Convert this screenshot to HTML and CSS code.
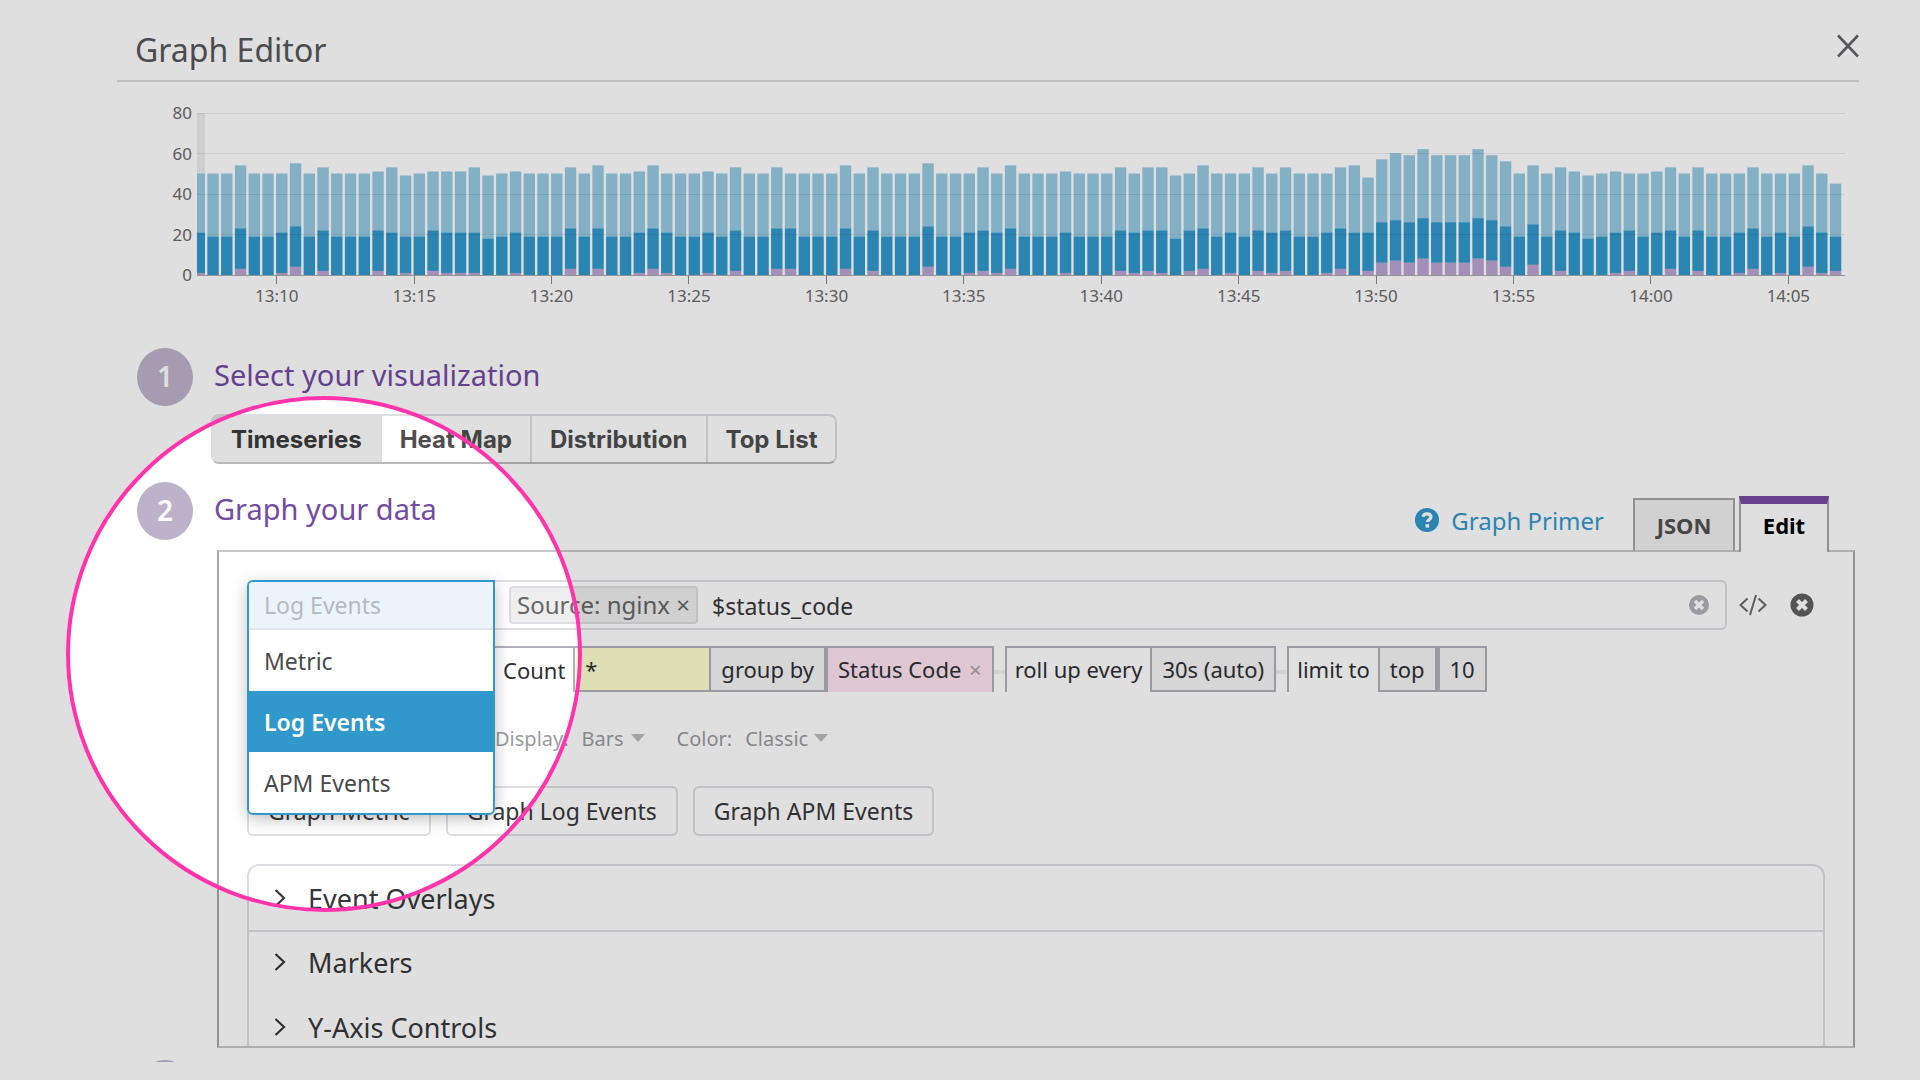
FILE: index.html
```html
<!DOCTYPE html>
<html lang="en">
<head>
  <meta charset="UTF-8">
  <title>Graph Editor</title>
  <link rel="stylesheet" href="styles.css">
</head>
<body>

<main class="editor">
  <header class="editor-header">
    <h1>Graph Editor</h1>
    <button class="icon-btn" aria-label="Close">
      <svg width="22" height="24" viewBox="0 0 22 24"><path d="M1 1.500L21 22.500M21 1.500L1 22.500" stroke="#65656a" stroke-width="2.600" fill="none"/></svg>
    </button>
  </header>

  <section class="chart">
    <div class="y-axis">
      <span>80</span><span>60</span><span>40</span><span>20</span><span>0</span>
    </div>
    <div class="plot">
      <svg class="bars" id="bars" viewBox="0 0 1648 163" preserveAspectRatio="none"></svg>
      <div class="x-axis">
        <span>13:10</span><span>13:15</span><span>13:20</span><span>13:25</span>
        <span>13:30</span><span>13:35</span><span>13:40</span><span>13:45</span>
        <span>13:50</span><span>13:55</span><span>14:00</span><span>14:05</span>
      </div>
    </div>
  </section>

  <section class="step">
    <span class="step-number">1</span>
    <h2>Select your visualization</h2>
  </section>

  <div class="viz-types">
    <button class="active">Timeseries</button>
    <button>Heat Map</button>
    <button>Distribution</button>
    <button>Top List</button>
  </div>

  <section class="step step-data">
    <span class="step-number">2</span>
    <h2>Graph your data</h2>
    <a class="primer" href="#">
      <svg width="24" height="24" viewBox="0 0 24 24"><circle cx="12" cy="12" r="12" fill="#3198cc"/><path d="M8 8.800C8.400 6.700 10 5.800 12 5.800c2.300 0 4 1.200 4 3.200 0 2.700-3.600 2.600-3.600 5.100" stroke="#fff" stroke-width="3.200" fill="none"/><rect x="10.500" y="16.200" width="3.600" height="3.400" fill="#fff"/></svg>
      Graph Primer
    </a>
    <div class="tabs">
      <button class="tab">JSON</button>
      <button class="tab active">Edit</button>
    </div>
  </section>

  <section class="panel">
    <div class="query-row">
      <div class="source">
        <div class="source-menu" role="listbox" aria-label="Source">
          <button class="current">Log Events</button>
          <button>Metric</button>
          <button class="selected">Log Events</button>
          <button>APM Events</button>
        </div>
      </div>
      <div class="search">
        <span class="tag">Source: nginx <button aria-label="Remove source">×</button></span>
        <input type="text" value="$status_code" aria-label="Search query">
        <button class="icon-btn" aria-label="Clear search">
          <svg width="20" height="20" viewBox="0 0 20 20"><circle cx="10" cy="10" r="10" fill="#b3b1b8"/><path d="M6 6l8 8M14 6l-8 8" stroke="#fff" stroke-width="3.600"/></svg>
        </button>
      </div>
      <button class="icon-btn code" aria-label="Edit as code">
        <svg width="28" height="22" viewBox="0 0 28 22"><path d="M8.500 4.500L1.500 11l7 6.500M19.500 4.500l7 6.500-7 6.500M17 1l-6 20" stroke="#6b6b6e" stroke-width="2" fill="none"/></svg>
      </button>
      <button class="icon-btn" aria-label="Remove query">
        <svg width="24" height="24" viewBox="0 0 24 24"><circle cx="12" cy="12" r="11.500" fill="#616161"/><path d="M7.500 7.500l9 9M16.500 7.500l-9 9" stroke="#fff" stroke-width="4"/></svg>
      </button>
    </div>

    <div class="function-row">
      <button class="cell count">Count</button>
      <input class="cell measure" type="text" value="*" aria-label="Measure">
      <button class="cell filled group">group by</button>
      <span class="cell facet">Status Code <button aria-label="Remove facet">×</button></span>
      <span class="link"></span>
      <span class="cell plain">roll up every</span>
      <button class="cell filled">30s (auto)</button>
      <span class="link"></span>
      <span class="cell plain">limit to</span>
      <button class="cell filled">top</button>
      <button class="cell filled">10</button>
    </div>

    <div class="display-row">
      <label for="display">Display:</label>
      <select id="display"><option>Bars</option></select>
      <svg class="caret" width="14" height="8" viewBox="0 0 14 8"><path d="M0 0h14L7 8z" fill="#bcbcbe"/></svg>
      <label class="color-label" for="color">Color:</label>
      <select id="color"><option>Classic</option></select>
      <svg class="caret" width="14" height="8" viewBox="0 0 14 8"><path d="M0 0h14L7 8z" fill="#bcbcbe"/></svg>
    </div>

    <div class="add-row">
      <button>Graph Metric</button>
      <button>Graph Log Events</button>
      <button>Graph APM Events</button>
    </div>

    <div class="options">
      <button>
        <svg width="12" height="18" viewBox="0 0 12 18"><path d="M1.500 1L10 9l-8.500 8" stroke="#37373b" stroke-width="2.200" fill="none"/></svg>
        Event Overlays
      </button>
      <button>
        <svg width="12" height="18" viewBox="0 0 12 18"><path d="M1.500 1L10 9l-8.500 8" stroke="#37373b" stroke-width="2.200" fill="none"/></svg>
        Markers
      </button>
      <button>
        <svg width="12" height="18" viewBox="0 0 12 18"><path d="M1.500 1L10 9l-8.500 8" stroke="#37373b" stroke-width="2.200" fill="none"/></svg>
        Y-Axis Controls
      </button>
    </div>
  </section>

  <section class="step step-last">
    <span class="step-number"></span>
  </section>
</main>

<div class="spotlight"></div>

<script src="chart.js"></script>
</body>
</html>
```
FILE: styles.css
```css
:root {
  --purple: #754aa3;
  --blue: #3198cc;
  --text: #37373b;
  --line: #dedde2;
  --cell-line: #b3b1b8;
  --pink: #ff33aa;
}

* {
  box-sizing: border-box;
}

body {
  margin: 0;
  height: 100vh;
  overflow: hidden;
  position: relative;
  background: #fff;
  color: var(--text);
  font-family: "Noto Sans", sans-serif;
}

button,
input,
select {
  font-family: inherit;
  font-size: inherit;
  color: inherit;
  margin: 0;
  padding: 0;
  border: none;
  background: none;
}

button {
  cursor: pointer;
}

h1,
h2 {
  margin: 0;
  font-weight: 400;
}

svg {
  display: block;
}

.icon-btn {
  flex: none;
}

.editor {
  height: calc(100vh - 18px);
  overflow: hidden;
  padding: 0 61px 0 117px;
}

.editor-header {
  display: flex;
  align-items: center;
  justify-content: space-between;
  height: 82px;
  padding: 20px 0 0 18px;
  border-bottom: 2px solid #dcdcdc;
}

.editor-header h1 {
  font-size: 32px;
  line-height: 44px;
  color: #57575b;
}

.editor-header .icon-btn {
  padding-bottom: 8px;
}

/* chart */
.chart {
  display: flex;
  padding: 31px 14px 0 48px;
  color: #6a6a6a;
  font-size: 17px;
  line-height: 20px;
}

.y-axis {
  width: 32px;
  height: 182px;
  margin-top: -10px;
  padding-right: 5px;
  display: flex;
  flex-direction: column;
  justify-content: space-between;
  text-align: right;
}

.plot {
  flex: 1;
}

.bars {
  width: 100%;
  height: 163px;
}

.x-axis {
  display: flex;
  margin: 0 -12px 0 11px;
}

.x-axis span {
  flex: 1;
  text-align: center;
}

.x-axis span::before {
  content: "";
  display: block;
  width: 1px;
  height: 8px;
  margin: 0 auto 2px;
  background: #888;
}

/* numbered steps */
.step {
  display: flex;
  align-items: center;
  height: 58px;
  margin-top: 42px;
  padding-left: 20px;
}

.step-number {
  width: 56px;
  height: 58px;
  margin-right: 21px;
  border-radius: 50%;
  background: #beb2cb;
  color: #fff;
  font-size: 28px;
  font-weight: 600;
  line-height: 56px;
  text-align: center;
}

.step h2 {
  padding-bottom: 4px;
  font-size: 29px;
  line-height: 40px;
  color: var(--purple);
}

.viz-types {
  display: flex;
  width: max-content;
  margin: 8px 0 0 94px;
  border: 2px solid var(--line);
  border-bottom-color: #b9b9b9;
  border-radius: 8px;
  overflow: hidden;
}

.viz-types button {
  height: 46px;
  padding: 0 18px;
  border-right: 2px solid var(--line);
  font-family: Inter, sans-serif;
  font-size: 24px;
  font-weight: 700;
  color: #4e4e4e;
}

.viz-types button:last-child {
  border-right: none;
}

.viz-types .active {
  background: #dedede;
  color: #333;
}

.step-data {
  position: relative;
  height: 68px;
  margin-top: 18px;
  padding-right: 30px;
}

.step-data .step-number,
.step-data h2 {
  margin-bottom: 10px;
}

.primer {
  display: flex;
  align-items: center;
  gap: 12px;
  margin-left: auto;
  margin-right: 29px;
  padding-top: 8px;
  font-size: 24px;
  color: var(--blue);
  text-decoration: none;
}

/* the open tab covers the top border of the panel */
.tabs {
  display: flex;
  align-items: flex-end;
  align-self: flex-end;
  gap: 4px;
  margin-bottom: -2px;
}

.tab {
  height: 54px;
  width: 102px;
  border: 2px solid #a5a5a5;
  border-bottom-color: #c9c9c9;
  background: #efefef;
  color: #505050;
  font-size: 22px;
  font-weight: 700;
}

.tab.active {
  height: 56px;
  width: 90px;
  padding-bottom: 6px;
  border-top: 8px solid var(--purple);
  border-bottom: none;
  background: #fff;
  color: #000;
}

/* panel */
.panel {
  height: calc(100vh - 582px);
  margin: 0 4px 0 100px;
  padding: 28px 28px 0;
  border: 2px solid #a9a9a9;
  border-top-color: #c9c9c9;
  border-bottom-color: #c9c9c9;
  overflow: hidden;
}

.query-row {
  display: flex;
  align-items: center;
  height: 50px;
  padding-right: 11px;
}

.source {
  position: relative;
  width: 248px;
  height: 50px;
}

.source-menu {
  position: absolute;
  top: 0;
  left: 0;
  z-index: 2;
  width: 100%;
  border: 2px solid var(--blue);
  border-radius: 6px 0 6px 6px;
  background: #fff;
  box-shadow: 0 4px 16px rgba(0, 0, 0, 0.25);
  overflow: hidden;
}

.source-menu button {
  display: block;
  width: 100%;
  height: 61px;
  padding-left: 15px;
  font-size: 23px;
  text-align: left;
  color: #4a4a4d;
}

.source-menu .current {
  height: 48px;
  border-bottom: 2px solid #e2e6ec;
  background: #ebf4fb;
  color: #b7b9c0;
}

.source-menu .selected {
  background: var(--blue);
  color: #fff;
  font-weight: 600;
}

.search {
  display: flex;
  align-items: center;
  flex: 1;
  height: 50px;
  padding: 0 16px 0 14px;
  border: 2px solid var(--line);
  border-left: none;
  border-radius: 0 6px 6px 0;
}

.tag {
  height: 38px;
  padding: 0 6px;
  border: 2px solid #dddde1;
  border-radius: 4px;
  background: #eee;
  color: #666;
  font-size: 24px;
  line-height: 32px;
  white-space: nowrap;
}

.search input {
  flex: 1;
  min-width: 0;
  padding: 2px 0 0 14px;
  font-size: 23px;
}

.code {
  margin: 0 23px 0 12px;
}

.function-row {
  display: flex;
  margin-top: 16px;
  padding-left: 248px;
  color: #2f2f33;
}

.cell {
  height: 46px;
  padding: 0 10px;
  border: 2px solid var(--cell-line);
  font-size: 22px;
  line-height: 42px;
  white-space: nowrap;
}

.filled {
  background: #f5f5f5;
}

.filled + .filled {
  border-left-width: 3px;
}

.count {
  padding: 0 8px;
  border-width: 2px 0 0;
}

.measure {
  width: 138px;
  background: #ffffd0;
}

.group {
  border-left: none;
}

.facet {
  border-bottom: none;
  background: #fee3f2;
}

.facet button {
  margin-left: 2px;
  color: #aaa0a8;
}

.plain {
  padding: 0 8px;
  border-width: 2px 0 0 2px;
}

.link {
  width: 11px;
  height: 4px;
  margin-top: 24px;
  background: #f0f0f0;
}

.display-row {
  display: flex;
  align-items: center;
  height: 28px;
  margin-top: 32px;
  padding-left: 248px;
  font-size: 20px;
  color: #9b9b9f;
}

.display-row select {
  appearance: none;
  margin-left: 13px;
}

.caret {
  margin-left: 6px;
}

.color-label {
  margin-left: 32px;
}

.add-row {
  display: flex;
  gap: 15px;
  margin-top: 34px;
}

.add-row button {
  height: 50px;
  padding: 0 19px;
  border: 2px solid var(--line);
  border-radius: 6px;
  font-size: 23px;
}

.options {
  margin-top: 28px;
  border: 2px solid var(--line);
  border-radius: 12px;
}

.options button {
  display: flex;
  align-items: center;
  gap: 22px;
  width: 100%;
  height: 65px;
  padding: 0 0 5px 25px;
  font-size: 27px;
}

.options button:first-child {
  height: 66px;
  padding-bottom: 0;
  border-bottom: 2px solid var(--line);
}

.step-last {
  margin-top: 12px;
}

/* dims everything outside the ring */
.spotlight {
  position: absolute;
  left: 66px;
  top: 396px;
  z-index: 5;
  width: 516px;
  height: 516px;
  border: 4px solid var(--pink);
  border-radius: 50%;
  box-shadow: 0 0 0 2400px rgba(0, 0, 0, 0.125);
  pointer-events: none;
}
```
FILE: chart.js
```js
// one entry per 30s: [total, top of the dark part, top of the purple part]
const data = [
  [50,21,1],[50,19,0],[50,19,0],[54,23,3],[50,19,0],[50,19,0],[50,21,1],[55,24,4],[50,19,0],[53,22,2],
  [50,19,0],[50,19,0],[50,19,0],[51,22,2],[53,21,0],[49,19,1],[50,19,0],[51,22,2],[51,21,1],[51,21,1],
  [53,21,1],[49,18,0],[50,19,0],[51,21,1],[50,19,0],[50,19,0],[50,19,0],[53,23,3],[50,19,0],[54,23,3],
  [50,19,0],[50,19,0],[51,21,1],[54,23,3],[50,21,1],[50,19,0],[50,19,0],[51,21,1],[50,19,0],[53,22,2],
  [50,19,0],[50,19,0],[53,23,3],[50,23,3],[50,19,0],[50,19,0],[50,19,0],[54,23,3],[50,19,0],[53,22,2],
  [50,19,0],[50,19,0],[50,19,0],[55,24,4],[50,19,0],[50,19,0],[50,21,1],[53,22,2],[50,21,1],[54,23,3],
  [50,19,0],[50,19,0],[50,19,0],[51,21,1],[50,19,0],[50,19,0],[50,19,0],[53,22,2],[50,21,1],[53,22,2],
  [53,22,1],[49,18,0],[50,22,2],[54,23,3],[50,19,0],[50,21,1],[50,19,0],[53,22,2],[50,21,1],[53,22,2],
  [50,19,0],[50,19,0],[50,21,1],[53,23,3],[54,21,0],[48,21,2],[57,26,6],[60,27,7],[59,26,6],[62,28,8],
  [59,26,6],[59,26,6],[59,26,6],[62,28,8],[59,27,7],[56,24,4],[50,19,0],[54,25,5],[50,19,0],[53,22,2],
  [51,21,0],[49,18,0],[50,19,0],[51,21,1],[50,22,2],[50,19,0],[51,21,0],[53,22,3],[50,19,0],[53,22,2],
  [50,19,0],[50,19,0],[50,21,1],[53,23,3],[50,19,0],[50,21,1],[50,19,0],[54,24,4],[50,21,1],[45,19,2]
];

const base = 162;
const unit = 2.03;
const pitch = 13.75;

function rect(x, y, w, h, fill) {
  return `<rect x="${x}" y="${y}" width="${w}" height="${h}" fill="${fill}"/>`;
}

function segment(x, from, to, fill) {
  return rect(x, base - to * unit, 11.4, (to - from) * unit, fill);
}

let out = rect(0, 0, 8, 62, '#ececec');
data.forEach(([total, dark, purple], i) => {
  const x = i * pitch - 3.4;
  out += segment(x, dark, total, '#97cae3');
  out += segment(x, purple, dark, '#3198cc');
  if (purple) out += segment(x, 0, purple, '#baa3d0');
});

[0, 40, 81, 121].forEach(y => {
  out += rect(0, y, 1648, 1, 'rgba(0,0,0,0.08)');
});
out += rect(0, base, 1648, 1, '#aaa');

document.getElementById('bars').innerHTML = out;
```
